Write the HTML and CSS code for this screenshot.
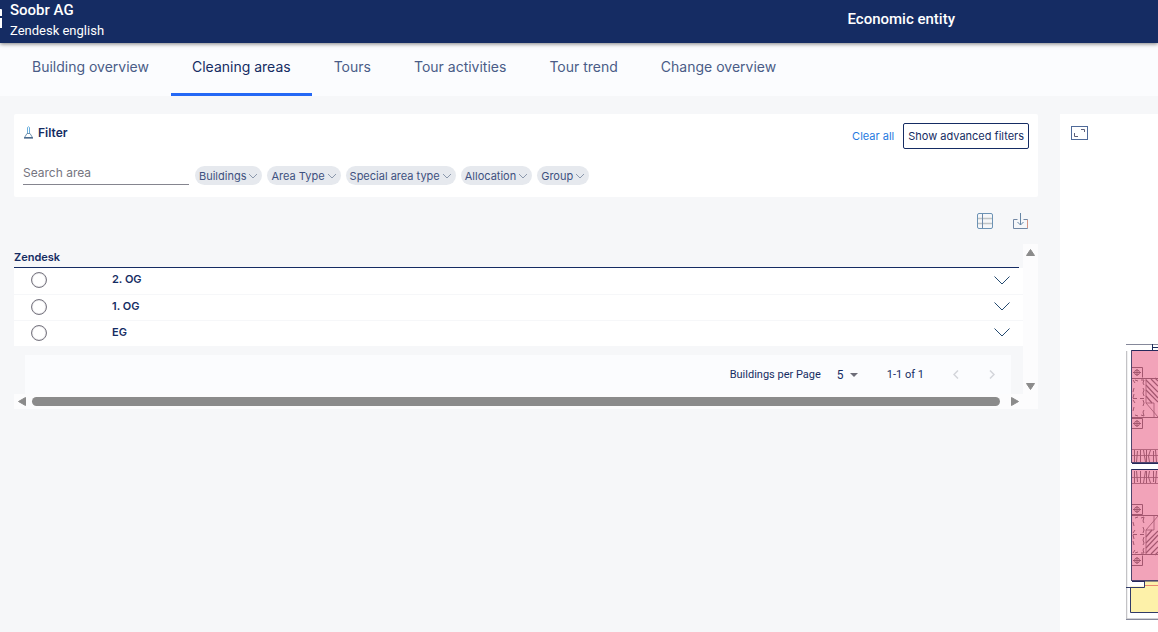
FILE: index.html
```html
<!DOCTYPE html>
<html lang="en">
<head>
<meta charset="utf-8">
<meta name="viewport" content="width=device-width, initial-scale=1">
<title>Cleaning areas</title>
<link rel="stylesheet" href="styles.css">
</head>
<body>
<svg class="defs" aria-hidden="true">
  <symbol id="chip-arrow" viewBox="0 0 10 6"><path d="M1 1l4 4 4-4" fill="none" stroke="currentColor" stroke-width="0.8"/></symbol>
  <symbol id="row-arrow" viewBox="0 0 16 9"><path d="M0.500 0.500L8 8l7.500-7.500" fill="none" stroke="currentColor"/></symbol>
</svg>

<header class="topbar">
  <div class="brand">
    <svg class="logo" width="2" height="20" viewBox="0 0 2 20" aria-hidden="true"><path d="M0 0h1q1 0 1 1v6H0zM0 9h2v10H0z" fill="#fff"/></svg>
    <div>
      <div class="company">Soobr AG</div>
      <div class="account">Zendesk english</div>
    </div>
  </div>
  <div class="entity">Economic entity</div>
</header>

<nav class="tabs">
  <a class="tab" href="#">Building overview</a>
  <a class="tab active" href="#" aria-current="page">Cleaning areas</a>
  <a class="tab" href="#">Tours</a>
  <a class="tab" href="#">Tour activities</a>
  <a class="tab" href="#">Tour trend</a>
  <a class="tab" href="#">Change overview</a>
</nav>

<main class="page">
  <div class="content">
    <section class="filter">
      <div class="filter-head">
        <h2 class="filter-title">
          <svg width="9" height="13" viewBox="0 0 9 13" fill="none" aria-hidden="true"><path d="M3.500 7V1.500q1-1.500 2 0V7" stroke="#5ba6d8" stroke-width="0.900"/><path d="M3 7.500h3l2.500 4h-8z" stroke="#4d779b" stroke-width="0.800"/><path d="M0 12h9" stroke="#25456f"/></svg>
          Filter
        </h2>
        <div class="filter-actions">
          <a class="clear" href="#">Clear all</a>
          <button class="advanced" type="button">Show advanced filters</button>
        </div>
      </div>
      <div class="filter-row">
        <input class="search" type="text" placeholder="Search area" aria-label="Search area">
        <div class="chips">
          <button class="chip" type="button">Buildings<svg width="10" height="6" aria-hidden="true"><use href="#chip-arrow"/></svg></button>
          <button class="chip" type="button">Area Type<svg width="10" height="6" aria-hidden="true"><use href="#chip-arrow"/></svg></button>
          <button class="chip" type="button">Special area type<svg width="10" height="6" aria-hidden="true"><use href="#chip-arrow"/></svg></button>
          <button class="chip" type="button">Allocation<svg width="10" height="6" aria-hidden="true"><use href="#chip-arrow"/></svg></button>
          <button class="chip" type="button">Group<svg width="10" height="6" aria-hidden="true"><use href="#chip-arrow"/></svg></button>
        </div>
      </div>
    </section>

    <div class="tools">
      <button class="icon-button" type="button" aria-label="Table view">
        <svg width="16" height="16" viewBox="0 0 16 16" fill="none" aria-hidden="true"><path d="M1 5.500h14M1 10.500h14" stroke="#bfc4c6" stroke-width="1.600"/><rect x="0.500" y="0.500" width="15" height="15" rx="1.500" stroke="#6c93b5"/><path d="M5.500 1v14" stroke="#6d89aa"/></svg>
      </button>
      <button class="icon-button" type="button" aria-label="Download">
        <svg width="15" height="16" viewBox="0 0 15 16" fill="none" aria-hidden="true"><path d="M4.500 6.500h-4v9h14v-9h-4" stroke="#7187a4"/><path d="M7.500 0v12M4.500 9l3 3 3-3" stroke="#6686a6"/><path d="M14.500 7v8" stroke="#d69583"/></svg>
      </button>
    </div>

    <div class="list">
      <div class="list-body">
        <h3 class="group-title">Zendesk</h3>
        <div class="floors">
          <div class="floor">
            <input class="radio" type="radio" name="floor" id="floor-2">
            <label class="floor-name" for="floor-2">2. OG</label>
            <button class="expand" type="button" aria-label="Expand 2. OG"><svg width="16" height="9" aria-hidden="true"><use href="#row-arrow"/></svg></button>
          </div>
          <div class="floor">
            <input class="radio" type="radio" name="floor" id="floor-1">
            <label class="floor-name" for="floor-1">1. OG</label>
            <button class="expand" type="button" aria-label="Expand 1. OG"><svg width="16" height="9" aria-hidden="true"><use href="#row-arrow"/></svg></button>
          </div>
          <div class="floor">
            <input class="radio" type="radio" name="floor" id="floor-0">
            <label class="floor-name" for="floor-0">EG</label>
            <button class="expand" type="button" aria-label="Expand EG"><svg width="16" height="9" aria-hidden="true"><use href="#row-arrow"/></svg></button>
          </div>
        </div>
        <div class="pager">
          <label for="page-size">Buildings per Page</label>
          <span class="size">
            <select id="page-size" class="size-select"><option>5</option><option>10</option></select>
            <svg width="8" height="4" viewBox="0 0 8 4" aria-hidden="true"><path d="M0 0h8L4 4z" fill="#6d6d78"/></svg>
          </span>
          <span class="range">1-1 of 1</span>
          <button class="step" type="button" aria-label="Previous page" disabled><svg width="6" height="9" viewBox="0 0 6 9" fill="none" aria-hidden="true"><path d="M5 0.500l-4 4 4 4" stroke="#d3d5da" stroke-width="1.500"/></svg></button>
          <button class="step" type="button" aria-label="Next page" disabled><svg width="6" height="9" viewBox="0 0 6 9" fill="none" aria-hidden="true"><path d="M1 0.500l4 4-4 4" stroke="#d3d5da" stroke-width="1.500"/></svg></button>
        </div>
      </div>
      <div class="vbar">
        <svg width="9" height="7" viewBox="0 0 9 7" aria-hidden="true"><path d="M4.500 0.500L8.500 6.500h-8z" fill="#8b8b8b" stroke="#8b8b8b" stroke-linejoin="round"/></svg>
        <svg width="9" height="7" viewBox="0 0 9 7" aria-hidden="true"><path d="M4.500 6.500L8.500 0.500h-8z" fill="#8b8b8b" stroke="#8b8b8b" stroke-linejoin="round"/></svg>
      </div>
      <div class="hbar">
        <svg width="8" height="9" viewBox="0 0 8 9" aria-hidden="true"><path d="M0.500 4.500L7.500 0.500v8z" fill="#8b8b8b" stroke="#8b8b8b" stroke-linejoin="round"/></svg>
        <div class="thumb"></div>
        <svg width="8" height="9" viewBox="0 0 8 9" aria-hidden="true"><path d="M7.500 4.500L0.500 0.500v8z" fill="#8b8b8b" stroke="#8b8b8b" stroke-linejoin="round"/></svg>
      </div>
    </div>
  </div>

  <aside class="plan">
    <button class="icon-button" type="button" aria-label="Full screen">
      <svg width="17" height="14" viewBox="0 0 17 14" fill="none" aria-hidden="true"><rect x="0.500" y="0.500" width="16" height="13" stroke="#4f6a99"/><path d="M3.500 7v3.500H7M10 3.500h3.500V6" stroke="#5d6079"/></svg>
    </button>
    <svg class="floorplan" width="32" height="276" viewBox="0 0 32 276" fill="none" role="img" aria-label="Floor plan">
      <path d="M0.500 7v268H32" stroke="#c3c3c6" stroke-width="1.500"/>
      <path d="M0 0.500h32M0 275.500h32" stroke="#85889a"/>
      <path d="M26.500 0v7" stroke="#1d2d5c"/><path d="M27 3.500h5" stroke="#1d2d5c"/>
      <rect x="5.500" y="6.500" width="34" height="112" fill="#f2a3b9" stroke="#4e456d"/>
      <rect x="5.500" y="125.500" width="34" height="111" fill="#f2a3b9" stroke="#4e456d"/>
      <path d="M6 6.500h26M6 119.500h26M6 125.500h26M6 237.500h26" stroke="#26295b"/>
      <path d="M4 242.500h15v-5h13v31H4z" fill="#fdf1a9"/>
      <path d="M0 243.500h18.500V238M4.500 243v25.500H32" stroke="#313b68"/>
      <path d="M19 241.500h13" stroke="#e8896e"/>
      <g id="bed" stroke="#a4576f">
        <path d="M6 23.500h10.500v10M6 74.500h10.500v10H6"/>
        <circle cx="11" cy="28.500" r="2.500"/><path d="M7 28.500h8M11 25v7"/>
        <circle cx="11" cy="79.500" r="2.500"/><path d="M7 79.500h8M11 76v7"/>
        <path d="M6 34.500h26M6 73.500h26M7 54.500h4M14 54.500h4"/>
        <path d="M7 36l2 3M8 44l-1 4M8 50l-1 4M7 56l2 3M8 63l-1 4M9 36l3 1M15 36l3 0-1 3 1 2M17 44l1 2-1 3 1 3M9 71l3 1M15 71l3 1-1-4 1-2M17 62l1-3-1-3"/>
        <path d="M20 36l12 12M25 35l7 7M20 41l12 13M20 46l12 12M20 52l6 7M29 34l3 3" stroke-width="1.200"/>
        <path d="M20 35v24h8M20 59l12 14M28 59v14" stroke-width="0.800"/>
      </g>
      <g id="closet" stroke="#a4576f">
        <path d="M6 105.500h26M6 111.500h26" stroke-width="0.800"/>
        <path d="M8.500 106v12M11.500 107l-1 11M14.500 106v12M17.500 106l2 12M20.500 106v12M24.500 106l-2 6 1 6M27.500 107v11M29.500 106l1 12"/>
      </g>
      <use href="#bed" transform="matrix(1 0 0 -1 0 245)"/>
      <use href="#closet" transform="matrix(1 0 0 -1 0 245)"/>
    </svg>
  </aside>
</main>
</body>
</html>
```

FILE: styles.css
```css
* { box-sizing: border-box; }

body {
  margin: 0;
  min-height: 100vh;
  display: flex;
  flex-direction: column;
  background: #f6f7f9;
  color: #152c63;
  font-family: Inter, "Liberation Sans", sans-serif;
  font-size: 11px;
  overflow-x: hidden;
}

button, input, select { font: inherit; color: inherit; }
button { cursor: pointer; }
a { text-decoration: none; }
svg { display: block; flex: none; }
.defs { position: absolute; width: 0; height: 0; }

.topbar {
  position: relative;
  display: flex;
  justify-content: space-between;
  height: 43px;
  padding-right: 203px;
  background: #152c63;
  color: #fff;
  font-family: Roboto, "Liberation Sans", sans-serif;
  box-shadow: 0 1px 4px rgba(0, 0, 0, 0.5);
}
.brand { display: flex; gap: 8px; }
.logo { margin-top: 9px; }
.company { font-size: 15px; font-weight: 500; line-height: 20px; }
.account { font-size: 13px; line-height: 21px; }
.entity { font-size: 15px; font-weight: 500; line-height: 38px; }

.tabs {
  display: flex;
  gap: 1px;
  height: 53px;
  padding-left: 11px;
  background: #fbfcfe;
  font-size: 14px;
}
.tab {
  padding: 0 21px;
  line-height: 48px;
  color: #4a5c87;
  border-bottom: 3px solid transparent;
}
.tab.active { color: #152c63; border-color: #2468f5; }

.page {
  flex: 1;
  display: grid;
  grid-template-columns: minmax(0, 1fr) 98px;
  gap: 22px;
  padding: 18px 0 0 14px;
}

.filter {
  padding: 9px 9px 12px;
  background: #fff;
  border-radius: 2px;
}
.filter-head { display: flex; justify-content: space-between; }
.filter-title {
  display: flex;
  align-items: center;
  gap: 5px;
  height: 19px;
  margin: 0;
  padding-left: 1px;
  font-size: 12px;
  font-weight: 600;
}
.filter-actions { display: flex; align-items: center; gap: 9px; }
.clear { color: #1f7ae0; }
.advanced {
  height: 26px;
  padding: 0 4px 1px;
  background: #fff;
  border: 1px solid #152c63;
  border-radius: 2px;
}
.filter-row {
  display: flex;
  align-items: flex-end;
  gap: 6px;
  margin-top: 13px;
}
.search {
  width: 166px;
  height: 23px;
  padding: 0 0 1px;
  border: 0;
  border-bottom: 1px solid #85858f;
  background: none;
  font-size: 12px;
  outline: none;
}
.search::placeholder { color: #757580; opacity: 1; }
.chips { display: flex; gap: 5px; }
.chip {
  display: flex;
  align-items: center;
  gap: 2px;
  height: 19px;
  padding: 0 4px;
  border: 0;
  border-radius: 10px;
  background: #e6e9ee;
  color: #3e5180;
}
.chip svg { color: #73839a; }

.tools {
  display: flex;
  justify-content: flex-end;
  gap: 20px;
  padding: 16px 10px 15px 0;
}
.icon-button { padding: 0; border: 0; background: none; }

.list {
  display: grid;
  grid-template-columns: minmax(0, 1fr) 15px;
  grid-template-rows: auto 15px;
}
.group-title {
  height: 24px;
  margin: 0 4px 0 0;
  padding-top: 3px;
  border-bottom: 1px solid #152c63;
  font-size: 11px;
  font-weight: 600;
  line-height: 20px;
}
.floors { background: #fff; }
.floor {
  display: flex;
  align-items: center;
  height: 26px;
  padding: 0 13px 2px 17px;
}
.floor + .floor { border-top: 1px solid #f6f7f9; }
.radio {
  appearance: none;
  width: 16px;
  height: 16px;
  margin: 0;
  border: 1px solid #787681;
  border-radius: 50%;
  box-shadow: inset 0 0 1px #787681;
}
.radio:checked { background: radial-gradient(#152c63 4px, transparent 5px); }
.floor-name { flex: 1; margin-left: 65px; padding-bottom: 2px; font-weight: 600; line-height: 20px; }
.expand { padding: 0; border: 0; background: none; color: #254a70; }

.pager {
  display: flex;
  align-items: center;
  justify-content: flex-end;
  height: 39px;
  margin: 9px 12px 0 11px;
  padding-right: 16px;
  background: #fbfcfe;
  font-family: Roboto, "Liberation Sans", sans-serif;
}
.size { display: flex; align-items: center; gap: 4px; margin: 0 29px 0 16px; }
.size-select { appearance: none; width: 9px; padding: 0; border: 0; background: none; font-size: 12px; }
.range { margin-right: 29px; }
.step { padding: 0; border: 0; background: none; }
.step + .step { margin-left: 30px; }

.vbar {
  display: flex;
  flex-direction: column;
  align-items: center;
  justify-content: space-between;
  padding: 5px 0 4px;
  background: #fcfcfd;
}
.hbar {
  grid-column: 1 / -1;
  display: flex;
  align-items: center;
  padding: 0 19px 0 4px;
  background: #fcfcfd;
}
.thumb { flex: 1; height: 9px; margin: 0 11px 0 6px; border-radius: 5px; background: #8b8b8b; }

.plan {
  display: flex;
  flex-direction: column;
  justify-content: space-between;
  align-items: flex-start;
  padding: 12px 0 12px 11px;
  background: #fff;
}
.floorplan { align-self: flex-end; }
```
